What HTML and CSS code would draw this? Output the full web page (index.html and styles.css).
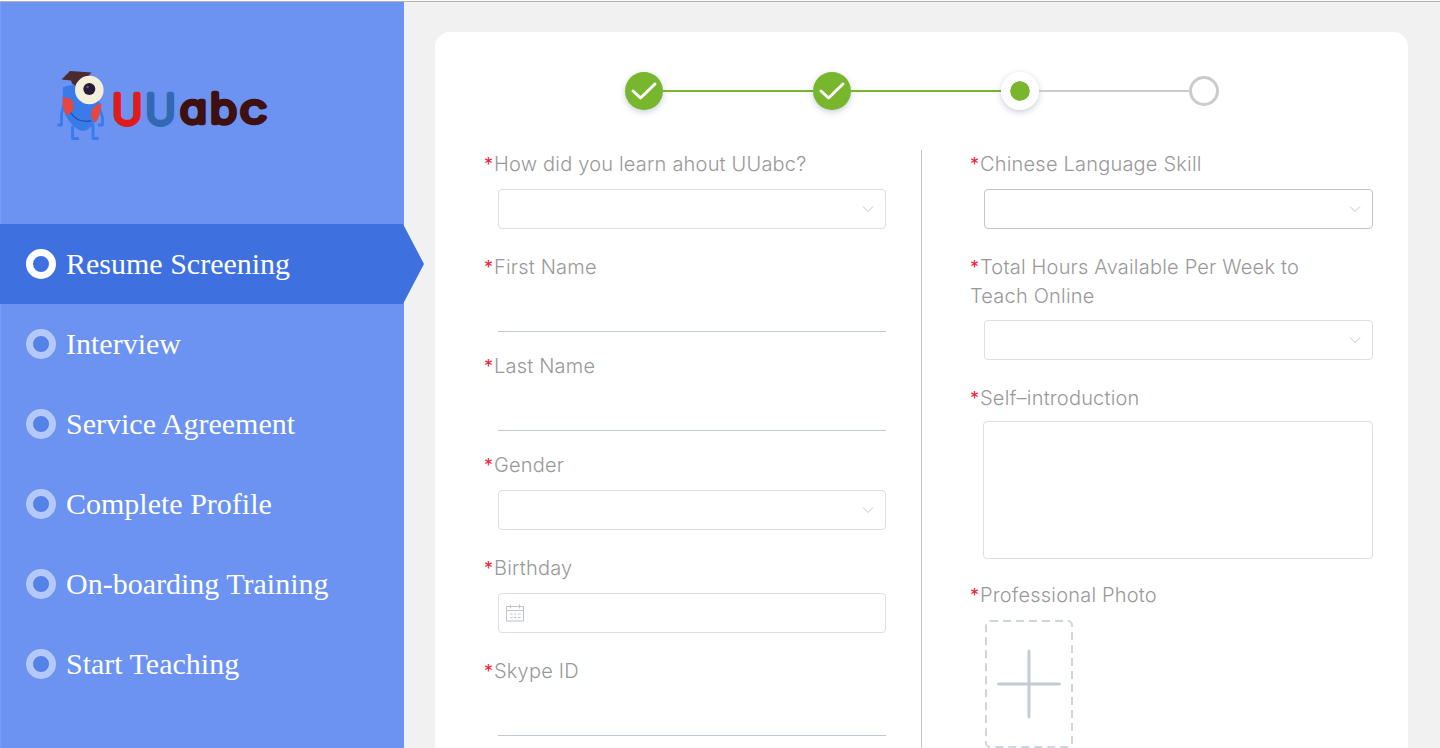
FILE: index.html
```html
<!DOCTYPE html>
<html lang="en">
<head>
<meta charset="utf-8">
<title>UUabc</title>
<link rel="stylesheet" href="styles.css">
</head>
<body>
<div class="page">
  <aside class="sidebar">
    <svg class="logo" viewBox="0 0 224 84" role="img" aria-label="UUabc">
      <g fill="none" stroke="#397be9" stroke-width="2.8" stroke-linejoin="round">
        <path d="M14 42L11.500 52L11.500 63L7.500 63"/><path d="M49 46L52.500 55L52.500 63L48 63"/>
        <path d="M22.500 64V76.500H29"/><path d="M43 62V76.500H48.500"/>
      </g>
      <path d="M13 25Q22 22 34 23L51 42Q51 52 45 60Q39 69 32 69Q25 67 19 59Q13 51 12.500 39Z" fill="#397be9"/>
      <path d="M12.500 36Q21 34 23.500 42Q24.500 51 16 53Q12.500 47 12.500 36Z" fill="#e8473f"/>
      <path d="M51.500 41.500Q42 43 41 52Q41 58 46 60Q50 55 51.500 41.500Z" fill="#e8473f"/>
      <path d="M21 51Q27 61 40.500 59" fill="none" stroke="#254f9f" stroke-width="1.300" stroke-linecap="round"/>
      <path d="M11.500 17.500L20 9L41.500 10.500L34 19L26 21.500V24L22 21.500L21 18.500Z" fill="#4b2b2e"/>
      <circle cx="39.300" cy="28" r="14.300" fill="#f3efdb"/>
      <circle cx="39.300" cy="27" r="6" fill="#251a38"/>
      <circle cx="37.500" cy="25" r="1.200" fill="#62576a"/>
      <g class="wordmark">
        <text x="62.300" y="61.500" textLength="30" lengthAdjust="spacingAndGlyphs" class="red">U</text>
        <text x="95.500" y="61.500" textLength="30" lengthAdjust="spacingAndGlyphs" class="blue">U</text>
        <text x="130" y="61" textLength="27" lengthAdjust="spacingAndGlyphs" class="brown">a</text>
        <text x="160" y="61" textLength="27" lengthAdjust="spacingAndGlyphs" class="brown">b</text>
        <text x="190" y="61" textLength="27" lengthAdjust="spacingAndGlyphs" class="brown">c</text>
      </g>
    </svg>
    <nav class="nav">
      <a class="nav-item active"><i class="ring"></i>Resume Screening</a>
      <a class="nav-item"><i class="ring"></i>Interview</a>
      <a class="nav-item"><i class="ring"></i>Service Agreement</a>
      <a class="nav-item"><i class="ring"></i>Complete Profile</a>
      <a class="nav-item"><i class="ring"></i>On-boarding Training</a>
      <a class="nav-item"><i class="ring"></i>Start Teaching</a>
    </nav>
  </aside>
  <main class="card">
    <div class="steps">
      <span class="dot"><svg viewBox="0 0 38 38"><path d="M8 19L15.500 26L30 12"/></svg></span>
      <span class="bar"></span>
      <span class="dot"><svg viewBox="0 0 38 38"><path d="M8 19L15.500 26L30 12"/></svg></span>
      <span class="bar"></span>
      <span class="dot current"></span>
      <span class="bar pending"></span>
      <span class="dot empty"></span>
    </div>
    <div class="form">
      <section class="col left">
        <label class="label"><b>*</b>How did you learn ahout UUabc?</label>
        <div class="select"><svg class="chevron" viewBox="0 0 12 8"><path d="M1 1.500L6 6.500L11 1.500"/></svg></div>
        <label class="label"><b>*</b>First Name</label>
        <div class="line"></div>
        <label class="label"><b>*</b>Last Name</label>
        <div class="line"></div>
        <label class="label"><b>*</b>Gender</label>
        <div class="select"><svg class="chevron" viewBox="0 0 12 8"><path d="M1 1.500L6 6.500L11 1.500"/></svg></div>
        <label class="label"><b>*</b>Birthday</label>
        <div class="select date"><svg class="calendar" viewBox="0 0 18 18"><path d="M.5 2.500H17.500V17H.5ZM.5 6.500H17.500M4.500 .5V4.500M13.500 .5V4.500"/><path stroke-dasharray="2.500 1.500" d="M4 10H14.500M4 13.500H14.500"/></svg></div>
        <label class="label"><b>*</b>Skype ID</label>
        <div class="line"></div>
      </section>
      <section class="col right">
        <label class="label"><b>*</b>Chinese Language Skill</label>
        <div class="select hover"><svg class="chevron" viewBox="0 0 12 8"><path d="M1 1.500L6 6.500L11 1.500"/></svg></div>
        <label class="label double"><b>*</b>Total Hours Available Per Week to<br>Teach Online</label>
        <div class="select"><svg class="chevron" viewBox="0 0 12 8"><path d="M1 1.500L6 6.500L11 1.500"/></svg></div>
        <label class="label"><b>*</b>Self–introduction</label>
        <div class="textarea"></div>
        <label class="label photo"><b>*</b>Professional Photo</label>
        <svg class="upload" viewBox="0 0 88 128"><rect x="1" y="1" width="86" height="126" rx="4"/><path d="M13.500 64H74.500M44 31V97"/></svg>
      </section>
    </div>
  </main>
</div>
</body>
</html>
```

FILE: styles.css
```css
* { box-sizing: border-box; }
body { margin: 0; background: #f1f1f1; overflow: hidden; }
.page { display: flex; height: 748px; border-top: 1px solid #fafafa; box-shadow: inset 0 1px #b4b4b4; padding-top: 1px; }
.sidebar { width: 404px; flex: none; background: #6c93f2; border-left: 1px solid #7a9df1; padding-top: 60px; }
.logo { display: block; width: 224px; height: 84px; margin-left: 49px; overflow: visible; }
.wordmark { font-family: Inter, sans-serif; font-size: 40.5px; font-weight: 300; font-feature-settings: "cv11"; stroke-width: 4.5px; stroke-linejoin: round; stroke-linecap: round; }
.red { fill: #df1b1b; stroke: #df1b1b; }
.blue { fill: #3269b2; stroke: #3269b2; }
.brown { fill: #3e100f; stroke: #3e100f; }
.nav { margin: 78px 0 0 -1px; }
.nav-item { display: flex; align-items: center; gap: 10px; width: 424px; height: 80px; padding-left: 26px; color: #fff; font: 30px "Liberation Serif", serif; }
.nav-item.active { background: #3e71df; clip-path: polygon(0 0, 403px 0, 100% 50%, 403px 100%, 0 100%); }
.ring { width: 30px; height: 30px; border: 7px solid #b5c9f8; border-radius: 50%; background: #5482e8; }
.active .ring { border-color: #fff; background: #3e71df; }
.card { width: 973px; height: 730px; margin: 30px 0 0 31px; background: #fff; border-radius: 15px; }
.steps { display: flex; align-items: center; height: 38px; margin: 40px 0 0 190px; }
.dot { width: 38px; height: 38px; border-radius: 50%; background: #78b72d; box-shadow: 0 2px 6px rgba(50, 65, 115, .27); flex: none; }
.dot svg { display: block; fill: none; stroke: #fff; stroke-width: 3; stroke-linecap: round; stroke-linejoin: round; }
.dot.current { background: #78b72d; border: 9px solid #fff; background-clip: padding-box; }
.dot.empty { width: 30px; height: 30px; background: #fff; border: 3px solid #cbcbcb; box-shadow: none; }
.bar { width: 150px; height: 2px; background: #78b72d; }
.bar.pending { background: #cbcbcb; }
.form { display: flex; margin-top: 40px; height: 612px; }
.col.left { width: 487px; padding: 0 35px 0 49px; border-right: 1px solid #c3c6d0; }
.col.right { width: 452px; padding-left: 48px; }
.label { display: block; height: 29px; margin-bottom: 10px; color: #999; font: 300 20px/29px Inter, sans-serif; letter-spacing: .2px; white-space: nowrap; }
.label b { display: inline-block; width: 10px; color: #f01c3b; font-weight: 400; font-size: 18px; letter-spacing: 0; }
.label.double { height: 58px; margin-bottom: 9px; }
.select { display: flex; align-items: center; justify-content: flex-end; height: 40px; width: 388px; margin: 0 0 24px 14px; padding-right: 11px; border: 1px solid #dcdfe6; border-radius: 4px; }
.right .select { width: 389px; }
.select.hover { border-color: #c0c4cc; }
.select.date { justify-content: flex-start; padding-left: 7px; }
.chevron { width: 12px; height: 8px; fill: none; stroke: #c0c4cc; }
.calendar { width: 18px; height: 18px; fill: none; stroke: #c0c4cc; }
.line { height: 50px; margin: -10px 0 20px 14px; width: 388px; border-bottom: 1px solid #c2c8d4; }
.textarea { width: 390px; height: 138px; margin: -2px 0 22px 13px; border: 1px solid #dcdfe6; border-radius: 4px; }
.upload { display: block; width: 88px; height: 128px; margin-left: 15px; fill: none; stroke: #c4ccd6; stroke-width: 3; stroke-linecap: round; }
.upload rect { stroke: #d0d4dc; stroke-width: 2; stroke-dasharray: 8 5; stroke-linecap: butt; }
```
